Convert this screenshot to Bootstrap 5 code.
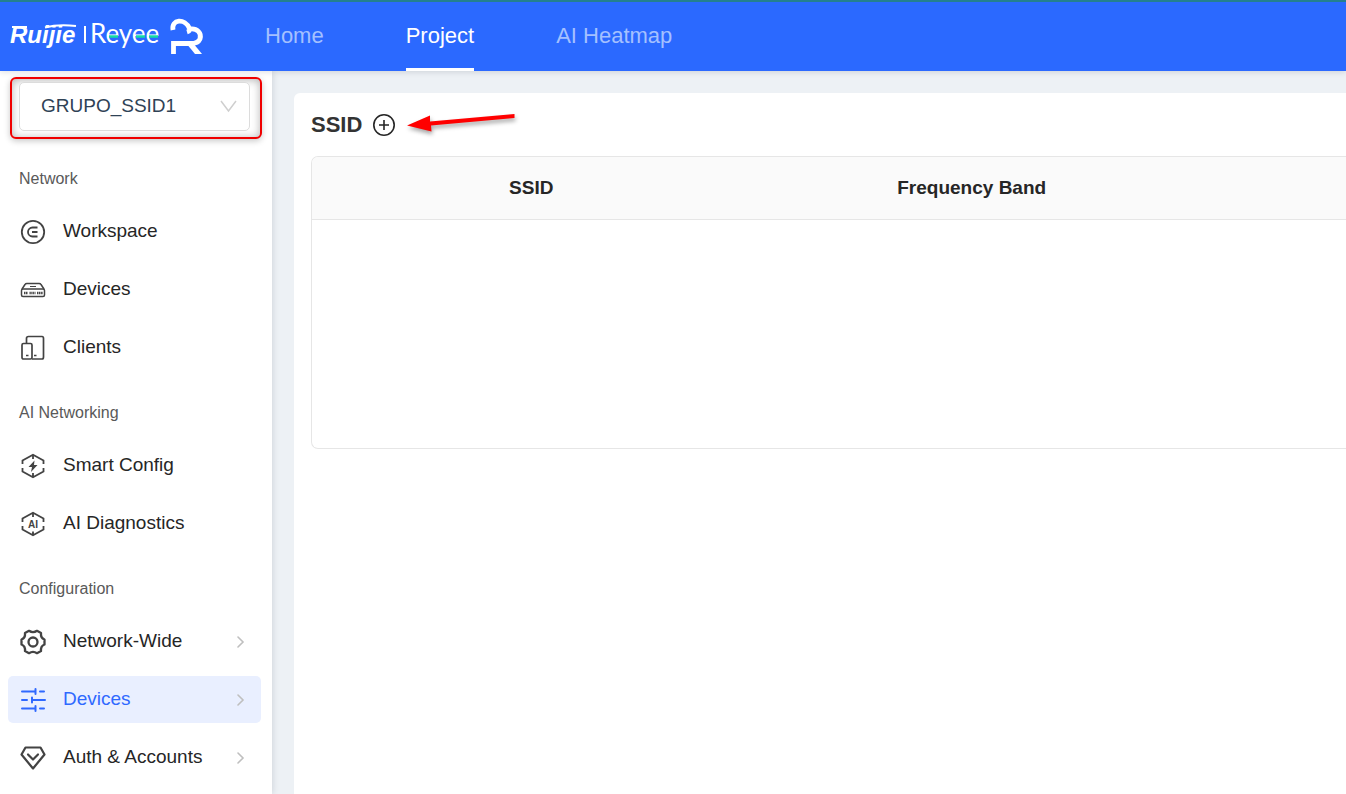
<!DOCTYPE html>
<html lang="en">
<head>
<meta charset="utf-8">
<meta name="viewport" content="width=device-width, initial-scale=1">
<title>Ruijie | Reyee</title>
<link href="https://cdn.jsdelivr.net/npm/bootstrap@5.3.0/dist/css/bootstrap.min.css" rel="stylesheet">
<style>
  body { font-family: "Liberation Sans", Arial, sans-serif; background: #edf1f5; color: #262626; }
  .topbar { background: #2b69ff; border-top: 2px solid #24808f; box-shadow: 0 1px 6px rgba(0,21,41,.14); z-index: 2; }
  .brand-box { width: 265px; }
  .topbar .nav { gap: 82px; }
  .topbar .nav-link { color: #a4c0ff; font-size: 22px; line-height: 64px; padding: 2px 0 0; border-bottom: 3px solid transparent; }
  .topbar .nav-link.active { color: #fff; border-color: #fff; }
  .sidebar { width: 272px; background: #fff; box-shadow: 1px 0 6px rgba(0,21,41,.12); padding: 6px 11px 12px 8px; z-index: 1; }
  .callout { margin: 0 -1px 0 2px; padding: 3px 10px 6px 7px; border: 2px solid #f00000; border-radius: 6px;
    background: #fff; box-shadow: 0 2px 6px rgba(0,0,0,.22), inset 0 1px 8px rgba(0,0,0,.3); }
  .callout select { height: 49px; padding: 0 40px 0 21px; border: 1px solid #dcdcdc; border-radius: 5px; appearance: none;
    background: #fff; color: #2f4256; font-size: 19px; }
  .callout .caret { right: 13px; top: 17px; pointer-events: none; }
  .group-label { font-size: 16px; line-height: 24px; color: #595959; padding: 30px 11px 17px; margin: 0; font-weight: 400; }
  .first-label { padding-top: 28px; }
  .side-list { gap: 11px; }
  .side-link { height: 47px; padding: 0 16px 2px 12px; border-radius: 5px; font-size: 19px; line-height: 24px; color: #262626; gap: 17px; }
  .side-link .glyph { width: 26px; height: 26px; color: #434343; margin-top: 2px; }
  .side-link.active { background: #e9efff; color: #2f69ff; }
  .side-link.active .glyph { color: #2f69ff; }
  .side-link .more { color: #bfbfbf; margin-top: 2px; }
  .panel { background: #fff; border-radius: 6px 0 0 0; margin: 22px 0 0 22px; padding: 18px 0 0 17px; }
  .panel h1 { font-size: 22px; line-height: 28px; font-weight: 700; color: #333; }
  .title-row { gap: 10px; }
  .grid-frame { margin-top: 17px; border: 1px solid #e6e6e6; border-right: 0; border-radius: 7px 0 0 7px; overflow: hidden; }
  .grid-frame table { table-layout: fixed; font-size: 19px; }
  .grid-frame th { height: 62px; background: #fafafa; text-align: center; vertical-align: middle; padding: 0 2px 0 0; color: #262626; }
  .grid-frame thead tr { border-bottom: 1px solid #e6e6e6; }
  .grid-frame td { height: 229px; border: 0; }
  .wide-col { width: 42.6%; }
  .red-arrow { filter: drop-shadow(1px 3px 2px rgba(0,0,0,.35)); overflow: visible; }
</style>
</head>
<body>
<svg class="d-none" aria-hidden="true">
  <symbol id="chev" viewBox="0 0 8 14"><path d="M1 2l5 5-5 5" fill="none" stroke="currentColor" stroke-width="1.6" stroke-linecap="round"/></symbol>
</svg>
<div class="d-flex flex-column min-vh-100 overflow-hidden">
  <header class="topbar d-flex position-relative">
    <a class="brand-box d-block" href="#" aria-label="Ruijie Reyee">
      <svg width="210" height="66" viewBox="0 2 210 66">
        <text x="10" y="43" font-family="Liberation Sans" font-weight="700" font-style="italic" font-size="24" fill="#fff">Ruijie</text>
        <path d="M12 27H27M45 27.500Q58 24 76 26" stroke="#fff" stroke-width="2" fill="none"/>
        <path d="M85 26v17" stroke="#fff" stroke-width="2"/>
        <text x="90" y="43" font-family="Lato" font-size="26" fill="#fff">Reyee</text>
        <path d="M109 36.500h9M136 36.500h9M149 36.500h9" stroke="#14dba6" stroke-width="2.600"/>
        <path d="M173 30C171 19 185 18 189.500 28.500Q190.500 31 187 32M190 29C197 28 202 33 200 39Q198 43.500 191 43.500H173.500V54" stroke="#fff" stroke-width="4.800" fill="none"/>
        <path d="M186 43H193L202 54H195Z" fill="#fff"/>
      </svg>
    </a>
    <nav class="nav flex-nowrap text-nowrap" aria-label="Main">
      <a class="nav-link" href="#">Home</a>
      <a class="nav-link active" aria-current="page" href="#">Project</a>
      <a class="nav-link" href="#">AI Heatmap</a>
    </nav>
  </header>
  <div class="d-flex flex-grow-1">
    <aside class="sidebar flex-shrink-0 position-relative">
      <div class="callout">
        <div class="position-relative">
          <select class="w-100" aria-label="Project group"><option>GRUPO_SSID1</option></select>
          <svg class="caret position-absolute" width="17" height="14" viewBox="0 0 17 14"><path d="M1 2l7.500 10L16 2" fill="none" stroke="#cfcfcf" stroke-width="1.500"/></svg>
        </div>
      </div>
      <h2 class="group-label first-label">Network</h2>
      <nav class="side-list d-flex flex-column">
        <a class="side-link d-flex align-items-center text-decoration-none" href="#">
          <svg class="glyph" viewBox="0 0 26 26" fill="none" stroke="currentColor" stroke-width="1.8"><circle cx="13" cy="13" r="11.200"/><path d="M17.500 8.500h-5a4.500 4.500 0 0 0 0 9h5M12 13h5.500"/></svg>
          <span>Workspace</span></a>
        <a class="side-link d-flex align-items-center text-decoration-none" href="#">
          <svg class="glyph" viewBox="0 0 26 26" fill="none" stroke="currentColor" stroke-width="1.5"><path d="M2 12l3-4.500Q5.500 6.500 7 6.500h12q1.500 0 2 1L24 12"/><rect x="1.500" y="12" width="23" height="7.500" rx="1.500"/><path d="M10 9.500h6" stroke-width="1"/><path d="M4 16h4M9.500 16h6M17 16h6" stroke-width="2.400" stroke-dasharray="1.300 .5"/></svg>
          <span>Devices</span></a>
        <a class="side-link d-flex align-items-center text-decoration-none" href="#">
          <svg class="glyph" viewBox="0 0 26 26" fill="none" stroke="currentColor" stroke-width="1.700"><path d="M6.500 8V3.500q0-2 2-2H22q1.500 0 1.500 2V22q0 2-1.500 2H12"/><rect x="2" y="8.500" width="10" height="15.500" rx="1.500"/><path d="M6 20.500h2.500M14 20.500h2.500"/></svg>
          <span>Clients</span></a>
      </nav>
      <h2 class="group-label">AI Networking</h2>
      <nav class="side-list d-flex flex-column">
        <a class="side-link d-flex align-items-center text-decoration-none" href="#">
          <svg class="glyph" viewBox="0 0 26 26" fill="none" stroke="currentColor" stroke-width="1.800"><path d="M2.500 11V7.500L13 1.800l10.500 5.700V11M2.500 15v3.500L13 24.200l10.500-5.700V15M13 2v4M13 20v4"/><path d="M14.500 7.500L8.500 14H12l-1 5L17.500 12H14z" fill="currentColor" stroke="none"/></svg>
          <span>Smart Config</span></a>
        <a class="side-link d-flex align-items-center text-decoration-none" href="#">
          <svg class="glyph" viewBox="0 0 26 26" fill="none" stroke="currentColor" stroke-width="1.800"><path d="M2.500 11V7.500L13 1.800l10.500 5.700V11M2.500 15v3.500L13 24.200l10.500-5.700V15M13 2v4M13 20.500v4"/><text x="13" y="17" text-anchor="middle" font-size="10" font-weight="700" fill="currentColor" stroke="none">AI</text></svg>
          <span>AI Diagnostics</span></a>
      </nav>
      <h2 class="group-label">Configuration</h2>
      <nav class="side-list d-flex flex-column">
        <a class="side-link d-flex align-items-center text-decoration-none" href="#">
          <svg class="glyph" viewBox="0 0 26 26" fill="none" stroke="currentColor" stroke-width="2.300" stroke-linejoin="round"><path d="M9 1.800Q13 4.500 17 1.800L21 4Q20.500 9 24.500 10.500V15.500Q20.500 17 21 22L17 24.200Q13 21.500 9 24.200L5 22Q5.500 17 1.500 15.500V10.500Q5.500 9 5 4Z"/><circle cx="13" cy="13" r="4.500"/></svg>
          <span class="flex-grow-1">Network-Wide</span><svg class="more" width="8" height="14"><use href="#chev"/></svg></a>
        <a class="side-link active d-flex align-items-center text-decoration-none" aria-current="page" href="#">
          <svg class="glyph" viewBox="0 0 26 26" fill="none" stroke="currentColor" stroke-width="2" stroke-linecap="round"><path d="M2 4.500h13M15.500 2v5M20 4.500h4M2 13h5M12 10.500v5M12 13h13M2 21.500h13M15.500 19v5M20 21.500h4"/></svg>
          <span class="flex-grow-1">Devices</span><svg class="more" width="8" height="14"><use href="#chev"/></svg></a>
        <a class="side-link d-flex align-items-center text-decoration-none" href="#">
          <svg class="glyph" viewBox="0 0 26 26" fill="none" stroke="currentColor" stroke-width="2.200" stroke-linejoin="round"><path d="M5.500 2.500h15l4 7L13 23.500 1.500 9.500z"/><path d="M8 9.500l5 5 5-5" stroke-linecap="round"/></svg>
          <span class="flex-grow-1">Auth &amp; Accounts</span><svg class="more" width="8" height="14"><use href="#chev"/></svg></a>
      </nav>
    </aside>
    <main class="panel flex-grow-1">
      <div class="title-row d-flex align-items-center">
        <h1 class="m-0">SSID</h1>
        <button type="button" class="btn p-0 border-0 d-flex" aria-label="Add SSID">
          <svg width="24" height="24" viewBox="0 0 24 24" fill="none" stroke="#262626" stroke-width="1.600"><circle cx="12" cy="12" r="10.200"/><path d="M12 7v10M7 12h10"/></svg>
        </button>
        <svg class="red-arrow" width="112" height="22" viewBox="0 0 112 22" aria-hidden="true"><path d="M1 11.500L24 1.500V7.500L108.500 0V4L25 11.500L25.500 17.500Z" fill="#f00"/></svg>
      </div>
      <div class="grid-frame">
        <table class="w-100">
          <thead><tr><th class="wide-col" scope="col">SSID</th><th class="wide-col" scope="col">Frequency Band</th><th></th></tr></thead>
          <tbody><tr><td colspan="3"></td></tr></tbody>
        </table>
      </div>
    </main>
  </div>
</div>
<script src="https://cdn.jsdelivr.net/npm/bootstrap@5.3.0/dist/js/bootstrap.bundle.min.js"></script>
</body>
</html>
